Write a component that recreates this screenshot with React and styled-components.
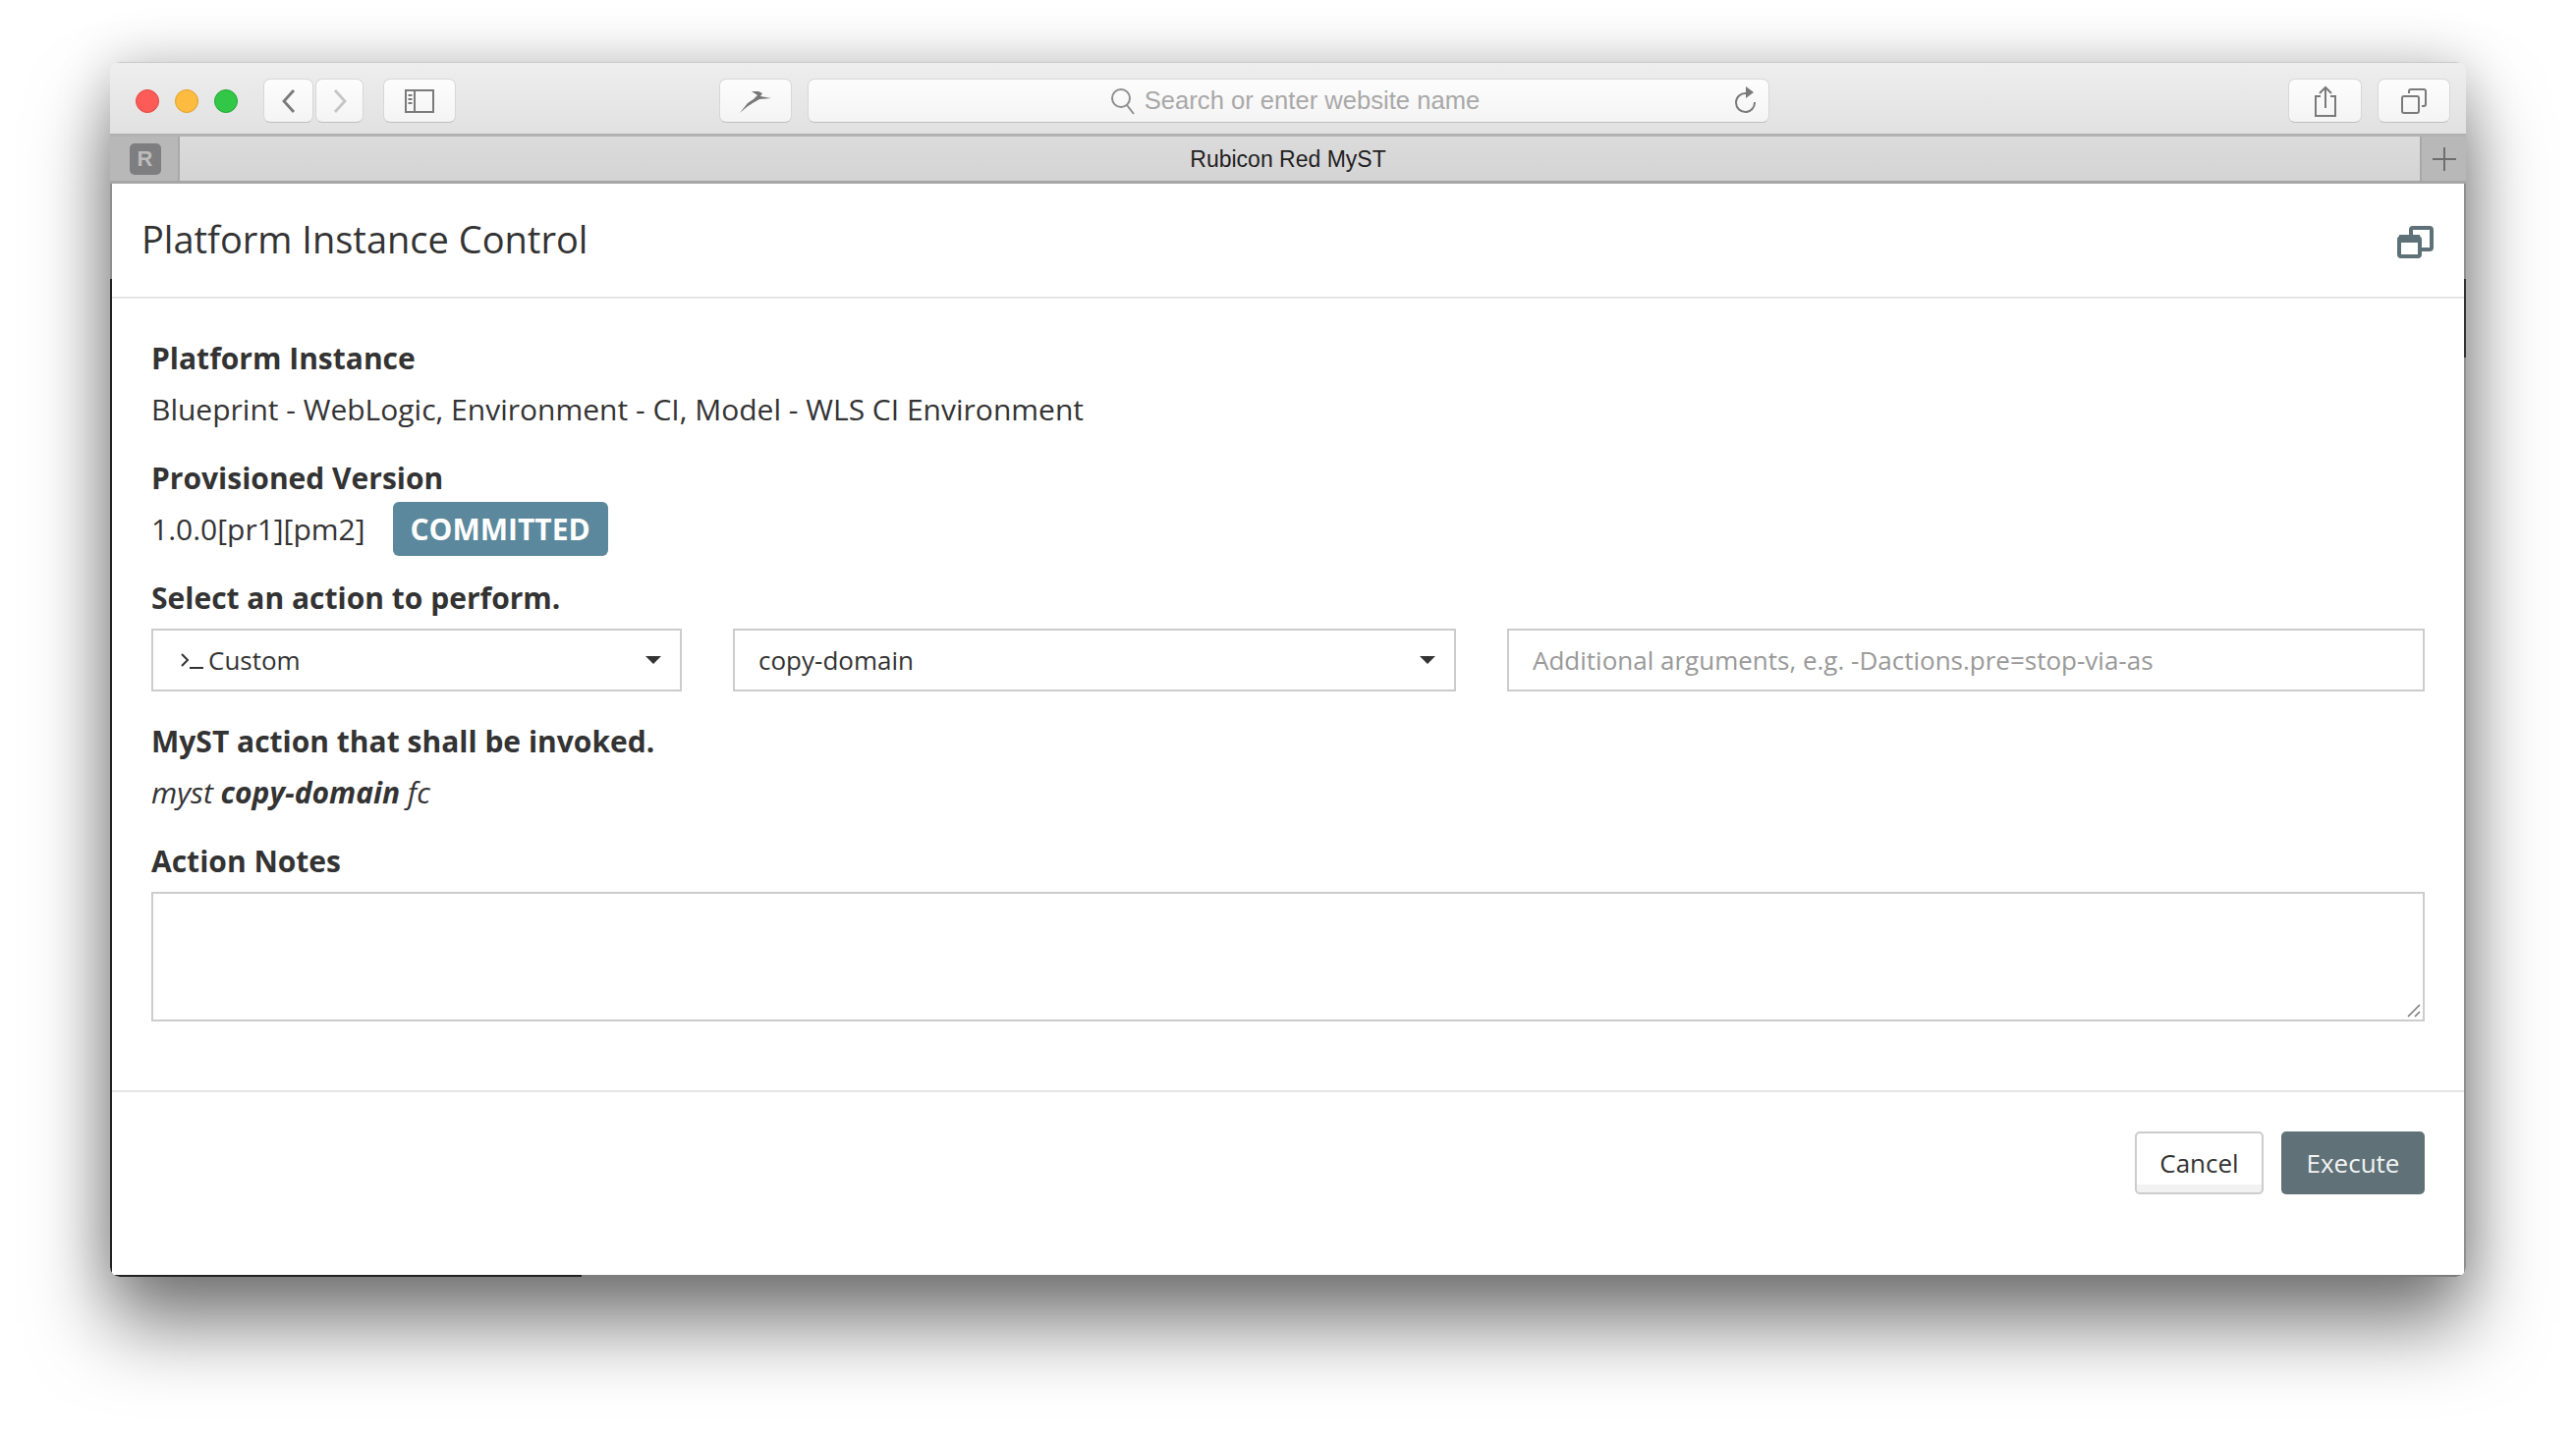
import React from 'react';
import styled, { createGlobalStyle } from 'styled-components';

const Global = createGlobalStyle`
  html, body { margin: 0; padding: 0; background: #fff; }
  body { width: 2622px; height: 1460px; overflow: hidden; font-family: "Open Sans", sans-serif; }
`;

const Page = styled.div`
  padding: 63px 112px 160px 112px;
  box-sizing: border-box;
  width: 2622px;
  height: 1460px;
`;

const Win = styled.div`
  position: relative;
  width: 2398px;
  height: 1237px;
  border-radius: 10px;
  background: #fff;
  display: flex;
  flex-direction: column;
  box-shadow: 0 50px 80px rgba(0,0,0,.5), 0 0 56px rgba(0,0,0,.2);
  overflow: hidden;
`;

const Toolbar = styled.div`
  height: 76px;
  flex: none;
  display: flex;
  align-items: center;
  box-sizing: border-box;
  padding: 5px 16px 0 26px;
  background: linear-gradient(#efeeef, #e2e1e2);
  border-top: 1px solid #c8c8c8;
  border-bottom: 3px solid #b3b1b3;
`;

const Lights = styled.div`
  display: flex;
  gap: 16px;
  margin-right: 26px;
`;

const Light = styled.span`
  width: 24px;
  height: 24px;
  border-radius: 50%;
  box-sizing: border-box;
  background: ${p => p.$c};
  border: 1px solid ${p => p.$b};
`;

const Btn = styled.div`
  width: ${p => p.$w}px;
  height: 45px;
  flex: none;
  margin-left: ${p => p.$ml || 0}px;
  display: flex;
  align-items: center;
  justify-content: center;
  box-sizing: border-box;
  background: linear-gradient(#fdfdfd, #f4f4f4);
  border: 1px solid #d8d7d8;
  border-bottom-color: #c0bfc0;
  border-radius: 7px;
`;

const Address = styled(Btn)`
  position: relative;
  flex: none;
  color: #a9a8a8;
  font-family: "Liberation Sans", sans-serif;
  font-size: 25.6px;
  gap: 9px;
  padding-left: 13px;
`;

const Reload = styled.svg`
  position: absolute;
  right: 11px;
  top: 6px;
`;

const TabBar = styled.div`
  height: 48px;
  flex: none;
  display: flex;
  box-sizing: border-box;
  background: linear-gradient(#dcdbdc, #d5d4d5);
  border-bottom: 3px solid #a7a6a7;
`;

const TabEnd = styled.div`
  width: ${p => p.$w}px;
  flex: none;
  display: flex;
  align-items: center;
  justify-content: center;
  background: #b9b8b9;
  box-sizing: border-box;
  ${p => p.$side}: 2px solid #a9a8a9;
`;

const Favicon = styled.span`
  width: 32px;
  height: 32px;
  margin-left: 2px;
  border-radius: 5px;
  background: #7e7d7f;
  color: #bdbcbd;
  display: flex;
  align-items: center;
  justify-content: center;
  font-family: "Liberation Sans", sans-serif;
  font-weight: 700;
  font-size: 22px;
`;

const TabTitle = styled.div`
  flex: 1;
  text-align: center;
  font-family: "Liberation Sans", sans-serif;
  font-size: 23px;
  line-height: 47px;
  color: #1f1f1f;
  padding-right: 24px;
`;

const Content = styled.div`
  flex: 1;
  display: flex;
  flex-direction: column;
  margin: 0 2px;
  color: #333;
`;

const Head = styled.div`
  height: 117px;
  flex: none;
  box-sizing: border-box;
  padding: 0 31px 3px 30px;
  display: flex;
  align-items: center;
  justify-content: space-between;
  border-bottom: 2px solid #e5e5e5;
`;

const Title = styled.h1`
  margin: 0;
  font-size: 38px;
  font-weight: 400;
  color: #333;
`;

const PopOut = styled.svg`
  margin-top: 6px;
`;

const Body = styled.div`
  height: 808px;
  flex: none;
  box-sizing: border-box;
  padding: 35px 40px 0 40px;
  border-bottom: 2px solid #e5e5e5;
`;

const Label = styled.div`
  font-size: 30px;
  line-height: 52px;
  font-weight: 700;
  color: #333;
  margin-top: ${p => p.$mt || 0}px;
`;

const Text = styled.div`
  font-size: 30px;
  line-height: 52px;
  margin-top: ${p => p.$mt || 0}px;
`;

const VersionRow = styled.div`
  display: flex;
  align-items: center;
  gap: 28px;
  height: 55px;
  margin-top: -2px;
  font-size: 30px;
`;

const Badge = styled.span`
  width: 219px;
  height: 55px;
  border-radius: 6px;
  background: #5b889c;
  color: #fff;
  font-weight: 700;
  font-size: 30px;
  display: flex;
  align-items: center;
  justify-content: center;
`;

const Fields = styled.div`
  display: flex;
  gap: 52px;
  margin-top: 5px;
`;

const Field = styled.div`
  width: ${p => p.$w}px;
  height: 64px;
  flex: none;
  box-sizing: border-box;
  border: 2px solid #ccc;
  display: flex;
  align-items: center;
  justify-content: space-between;
  padding: 0 19px 0 24px;
  font-size: 26px;
  color: ${p => p.$muted ? '#999' : '#333'};
`;

const Caret = styled.span`
  width: 0;
  height: 0;
  border-left: 8px solid transparent;
  border-right: 8px solid transparent;
  border-top: 8px solid #333;
`;

const CustomText = styled.span`
  display: flex;
  align-items: center;
  gap: 4px;
`;

const Notes = styled.div`
  position: relative;
  height: 132px;
  box-sizing: border-box;
  border: 2px solid #ccc;
  margin-top: 5px;
`;

const Grip = styled.svg`
  position: absolute;
  right: 2px;
  bottom: 2px;
`;

const Foot = styled.div`
  flex: 1;
  display: flex;
  justify-content: flex-end;
  gap: 18px;
  padding: 40px 40px 0 0;
`;

const Cancel = styled.div`
  width: 131px;
  height: 64px;
  box-sizing: border-box;
  border: 2px solid #ccc;
  background: linear-gradient(#fff 86%, #f2f2f2 86%);
  border-radius: 5px;
  display: flex;
  align-items: center;
  justify-content: center;
  font-size: 26px;
  color: #333;
`;

const Execute = styled(Cancel)`
  width: 146px;
  border: none;
  background: #607178;
  color: #f2f4f4;
`;

const Edge = styled.span`
  position: absolute;
  ${p => p.$css}
`;

export default function App() {
  return (
    <Page>
      <Global />
      <Win>
        <Toolbar>
          <Lights>
            <Light $c="#fc5b57" $b="#e2463f" />
            <Light $c="#fdbc40" $b="#df9f27" />
            <Light $c="#33c748" $b="#1fa731" />
          </Lights>
          <Btn $w={51}>
            <svg width="16" height="26" viewBox="0 0 16 26" fill="none" stroke="#7b7a7b" strokeWidth="2.8"><path d="M13 2 L3 13 L13 24" /></svg>
          </Btn>
          <Btn $w={49} $ml={2}>
            <svg width="16" height="26" viewBox="0 0 16 26" fill="none" stroke="#c6c5c6" strokeWidth="2.8"><path d="M3 2 L13 13 L3 24" /></svg>
          </Btn>
          <Btn $w={74} $ml={20}>
            <svg width="30" height="24" viewBox="0 0 30 24" fill="none" stroke="#7b7a7b" strokeWidth="2"><rect x="1" y="1" width="28" height="22" /><path d="M10 1 V23" /><path d="M3.5 6h4M3.5 10h4M3.5 14h4" strokeWidth="2" /></svg>
          </Btn>
          <Btn $w={74} $ml={268}>
            <svg width="34" height="24" viewBox="0 0 34 24"><path d="M1 24 L9 14 L15 10 L19 6 L13 2 L20 2 L24 4 L22 7 L33 9 L21 10 L14 14 L8 18 Z" fill="#777" /></svg>
          </Btn>
          <Address $w={979} $ml={16}>
            <svg width="26" height="28" viewBox="0 0 26 28" fill="none" stroke="#8f8e8f" strokeWidth="2"><circle cx="11" cy="11" r="9" /><path d="M17 18 L24 27" /></svg>
            <span>Search or enter website name</span>
            <Reload width="24" height="30" viewBox="0 0 24 30" fill="none" stroke="#7b7a7b" strokeWidth="2"><path d="M12 8 A 9.5 9.5 0 1 0 21 17" /><path d="M12 1 L20 7 L12 13 Z" fill="#7b7a7b" stroke="none" /></Reload>
          </Address>
          <Btn $w={75} $ml={528}>
            <svg width="22" height="32" viewBox="0 0 22 32" fill="none" stroke="#7b7a7b" strokeWidth="2"><path d="M6 11 H1 V31 H21 V11 H16" /><path d="M11 23 V2 M5 8 L11 2 L17 8" /></svg>
          </Btn>
          <Btn $w={74} $ml={16}>
            <svg width="26" height="26" viewBox="0 0 26 26" fill="none" stroke="#7b7a7b" strokeWidth="2"><rect x="1" y="8" width="17" height="17" rx="2" /><path d="M8 5 V3 a2 2 0 0 1 2 -2 H23 a2 2 0 0 1 2 2 V16 a2 2 0 0 1 -2 2 H21" /></svg>
          </Btn>
        </Toolbar>
        <TabBar>
          <TabEnd $w={71} $side="border-right"><Favicon>R</Favicon></TabEnd>
          <TabTitle>Rubicon Red MyST</TabTitle>
          <TabEnd $w={47} $side="border-left">
            <svg width="24" height="24" viewBox="0 0 24 24" stroke="#6f6e6f" strokeWidth="2"><path d="M12 0 V24 M0 12 H24" /></svg>
          </TabEnd>
        </TabBar>
        <Content>
          <Head>
            <Title>Platform Instance Control</Title>
            <PopOut width="37" height="33" viewBox="0 0 37 33" fill="none" stroke="#5f7178" strokeWidth="4"><rect x="14" y="2" width="21" height="22" rx="2" /><rect x="2" y="12" width="21" height="19" rx="2" fill="#fff" /><path d="M2 13 H23" strokeWidth="8" /></PopOut>
          </Head>
          <Body>
            <Label>Platform Instance</Label>
            <Text>Blueprint - WebLogic, Environment - CI, Model - WLS CI Environment</Text>
            <Label $mt={18}>Provisioned Version</Label>
            <VersionRow>1.0.0[pr1][pm2]<Badge>COMMITTED</Badge></VersionRow>
            <Label $mt={17}>Select an action to perform.</Label>
            <Fields>
              <Field $w={540}>
                <CustomText>
                  <svg width="28" height="20" viewBox="0 0 28 20" fill="none" stroke="#333" strokeWidth="2"><path d="M5 4 L11 10 L5 16" /><path d="M13 18 H27" /></svg>
                  Custom
                </CustomText>
                <Caret />
              </Field>
              <Field $w={736}>copy-domain<Caret /></Field>
              <Field $w={934} $muted>Additional arguments, e.g. -Dactions.pre=stop-via-as</Field>
            </Fields>
            <Label $mt={25}>MyST action that shall be invoked.</Label>
            <Text><em>myst <strong>copy-domain</strong> fc</em></Text>
            <Label $mt={18}>Action Notes</Label>
            <Notes>
              <Grip width="14" height="14" viewBox="0 0 14 14" stroke="#777" strokeWidth="1.5"><path d="M1 13 L13 1 M8 13 L13 8" /></Grip>
            </Notes>
          </Body>
          <Foot>
            <Cancel>Cancel</Cancel>
            <Execute>Execute</Execute>
          </Foot>
        </Content>
        <Edge $css="left:0;top:221px;bottom:0;width:2px;background:#222;" />
        <Edge $css="left:0;bottom:0;width:480px;height:2px;background:#222;" />
        <Edge $css="left:480px;right:0;bottom:0;height:2px;background:#7d7d7d;" />
        <Edge $css="right:0;top:124px;bottom:2px;width:2px;background:#8f8f8f;" />
        <Edge $css="right:0;top:221px;height:80px;width:2px;background:#333;" />
        <Edge $css="left:0;top:124px;height:97px;width:2px;background:#8f8f8f;" />
      </Win>
    </Page>
  );
}
